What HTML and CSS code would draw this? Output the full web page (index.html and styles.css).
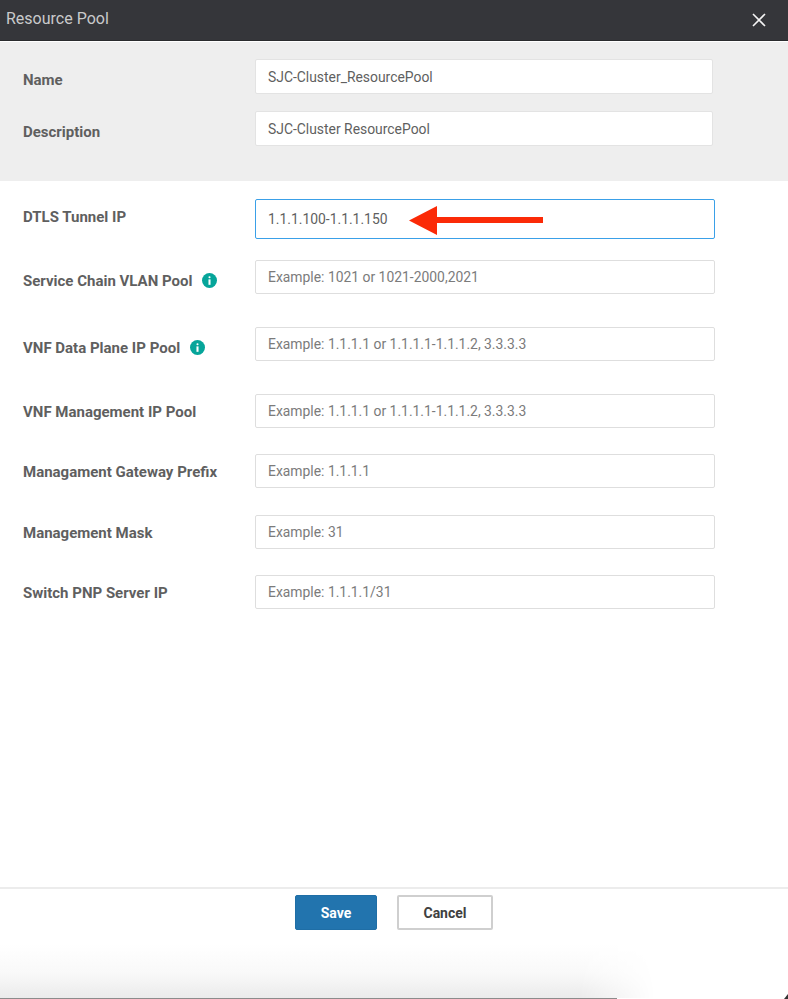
FILE: index.html
```html
<!DOCTYPE html>
<html lang="en">
<head>
  <meta charset="UTF-8" />
  <meta name="viewport" content="width=device-width, initial-scale=1.0"/>
  <title>Resource Pool</title>
  <link rel="stylesheet" href="styles.css">
</head>
<body>
  <header class="title-bar">
    <span class="title">Resource Pool</span>
    <svg class="close-icon" width="14" height="14" viewBox="0 0 14 14" aria-label="Close">
      <path d="M1 1 L13 13 M13 1 L1 13" stroke="#f4f4f4" stroke-width="1.6" fill="none"/>
    </svg>
  </header>

  <section class="top-section">
    <div class="row row-name">
      <label class="label label-low">Name</label>
      <input class="field field-short" type="text" value="SJC-Cluster_ResourcePool">
    </div>
    <div class="row row-desc">
      <label class="label label-low">Description</label>
      <input class="field field-short" type="text" value="SJC-Cluster ResourcePool">
    </div>
  </section>

  <section class="form-section">
    <div class="row row-dtls">
      <label class="label label-high">DTLS Tunnel IP</label>
      <div class="focus-wrap">
        <input class="field field-focus" type="text" value="1.1.1.100-1.1.1.150">
        <svg class="red-arrow" width="134" height="29" viewBox="0 0 134 29">
          <path d="M0 14.5 L28 0 V11 H134 V17 H28 V29 Z" fill="#fb2a07"/>
        </svg>
      </div>
    </div>
    <div class="row row-vlan">
      <label class="label label-low">Service Chain VLAN Pool
        <svg class="info-icon" width="15" height="15" viewBox="0 0 16 16">
          <circle cx="8" cy="8" r="8" fill="#06a59a"/>
          <rect x="6.9" y="3.4" width="2.2" height="2.2" rx="1" fill="#fff"/>
          <rect x="6.9" y="6.8" width="2.2" height="5.8" fill="#fff"/>
        </svg>
      </label>
      <input class="field" type="text" placeholder="Example: 1021 or 1021-2000,2021">
    </div>
    <div class="row row-data">
      <label class="label label-low">VNF Data Plane IP Pool
        <svg class="info-icon" width="15" height="15" viewBox="0 0 16 16">
          <circle cx="8" cy="8" r="8" fill="#06a59a"/>
          <rect x="6.9" y="3.4" width="2.2" height="2.2" rx="1" fill="#fff"/>
          <rect x="6.9" y="6.8" width="2.2" height="5.8" fill="#fff"/>
        </svg>
      </label>
      <input class="field" type="text" placeholder="Example: 1.1.1.1 or 1.1.1.1-1.1.1.2, 3.3.3.3">
    </div>
    <div class="row row-mgmt">
      <label class="label label-plain">VNF Management IP Pool</label>
      <input class="field" type="text" placeholder="Example: 1.1.1.1 or 1.1.1.1-1.1.1.2, 3.3.3.3">
    </div>
    <div class="row row-tight">
      <label class="label label-plain">Managament Gateway Prefix</label>
      <input class="field" type="text" placeholder="Example: 1.1.1.1">
    </div>
    <div class="row row-tight">
      <label class="label label-plain">Management Mask</label>
      <input class="field" type="text" placeholder="Example: 31">
    </div>
    <div class="row row-tight">
      <label class="label label-plain">Switch PNP Server IP</label>
      <input class="field" type="text" placeholder="Example: 1.1.1.1/31">
    </div>
  </section>

  <footer class="button-bar">
    <button class="btn btn-save">Save</button>
    <button class="btn btn-cancel">Cancel</button>
  </footer>

  <div class="bottom-shade"></div>
  <div class="bottom-line"></div>
  <svg class="corner-mark" width="5" height="5" viewBox="0 0 5 5">
    <path d="M5 0 V5 H1 Z" fill="#333"/>
  </svg>
</body>
</html>
```

FILE: styles.css
```css
html, body {
  height: 100%;
}

body {
  margin: 0;
  height: 999px;
  overflow: hidden;
  position: relative;
  display: flex;
  flex-direction: column;
  background-color: #fff;
  font-family: Roboto, "Liberation Sans", sans-serif;
  font-size: 14px;
  color: #5f5f5f;
}

.title-bar {
  height: 41px;
  flex: none;
  display: flex;
  align-items: center;
  justify-content: space-between;
  box-sizing: border-box;
  padding: 0 22px 0 6px;
  background-color: #35363a;
  border-bottom: 1px solid #2a2b2e;
}

.title {
  font-size: 16px;
  color: #c9cacb;
  margin-top: -4px;
}

.close-icon {
  display: block;
}

.top-section {
  flex: none;
  height: 139px;
  margin-top: 1px;
  box-sizing: border-box;
  padding-top: 17px;
  background-color: #eee;
}

.form-section {
  flex: none;
  height: 706px;
  box-sizing: border-box;
  padding-top: 18px;
}

.row {
  display: flex;
  align-items: center;
  padding-left: 23px;
}

.row-desc {
  margin-top: 17px;
}

.row-vlan {
  margin-top: 21px;
}

.row-data,
.row-mgmt {
  margin-top: 33px;
}

.row-tight {
  margin-top: 26.4px;
}

.label {
  width: 232px;
  flex: none;
  font-weight: 700;
  font-size: 15px;
  line-height: 20px;
  display: flex;
  align-items: center;
  gap: 10px;
  color: #5f5f5f;
}

.label-low {
  margin-top: 7px;
}

.label-high {
  margin-top: -4px;
}

.label-plain {
  margin-top: 2px;
}

.field {
  width: 460px;
  height: 34px;
  box-sizing: border-box;
  padding: 0 12px;
  border: 1px solid #dedede;
  border-radius: 2px;
  background-color: #fff;
  font-family: inherit;
  font-size: 13.9px;
  color: #5f5f5f;
  outline: none;
}

.field::placeholder {
  color: #7b7b7b;
  opacity: 1;
}

.field-short {
  width: 458px;
  height: 35px;
  border-color: #e3e3e3;
}

.focus-wrap {
  position: relative;
}

.field-focus {
  display: block;
  height: 40px;
  border-color: #3aa0e8;
}

.red-arrow {
  position: absolute;
  left: 154px;
  top: 7px;
}

.button-bar {
  flex: none;
  height: 48px;
  box-sizing: border-box;
  display: flex;
  justify-content: center;
  gap: 20px;
  padding: 6px 0 0 0;
  border-top: 2px solid #ececec;
}

.btn {
  height: 35px;
  box-sizing: border-box;
  border-radius: 2px;
  font-family: inherit;
  font-size: 14px;
  font-weight: 700;
}

.btn-save {
  width: 82px;
  background-color: #2274ae;
  border: 1px solid #1f6ea6;
  color: #fff;
}

.btn-cancel {
  width: 96px;
  background-color: #fff;
  border: 2px solid #cfcfcf;
  color: #404040;
}

.bottom-shade {
  flex: none;
  width: 660px;
  height: 63px;
  background: linear-gradient(to bottom, #fff 15%, #f9f9f9 60%, #ebebeb);
  -webkit-mask-image: linear-gradient(to right, #000 580px, transparent 655px);
  mask-image: linear-gradient(to right, #000 580px, transparent 655px);
}

.bottom-line {
  flex: none;
  width: 617px;
  height: 1px;
  background-color: #8c8c8c;
}

.corner-mark {
  position: absolute;
  right: 0;
  bottom: 0;
}
```
